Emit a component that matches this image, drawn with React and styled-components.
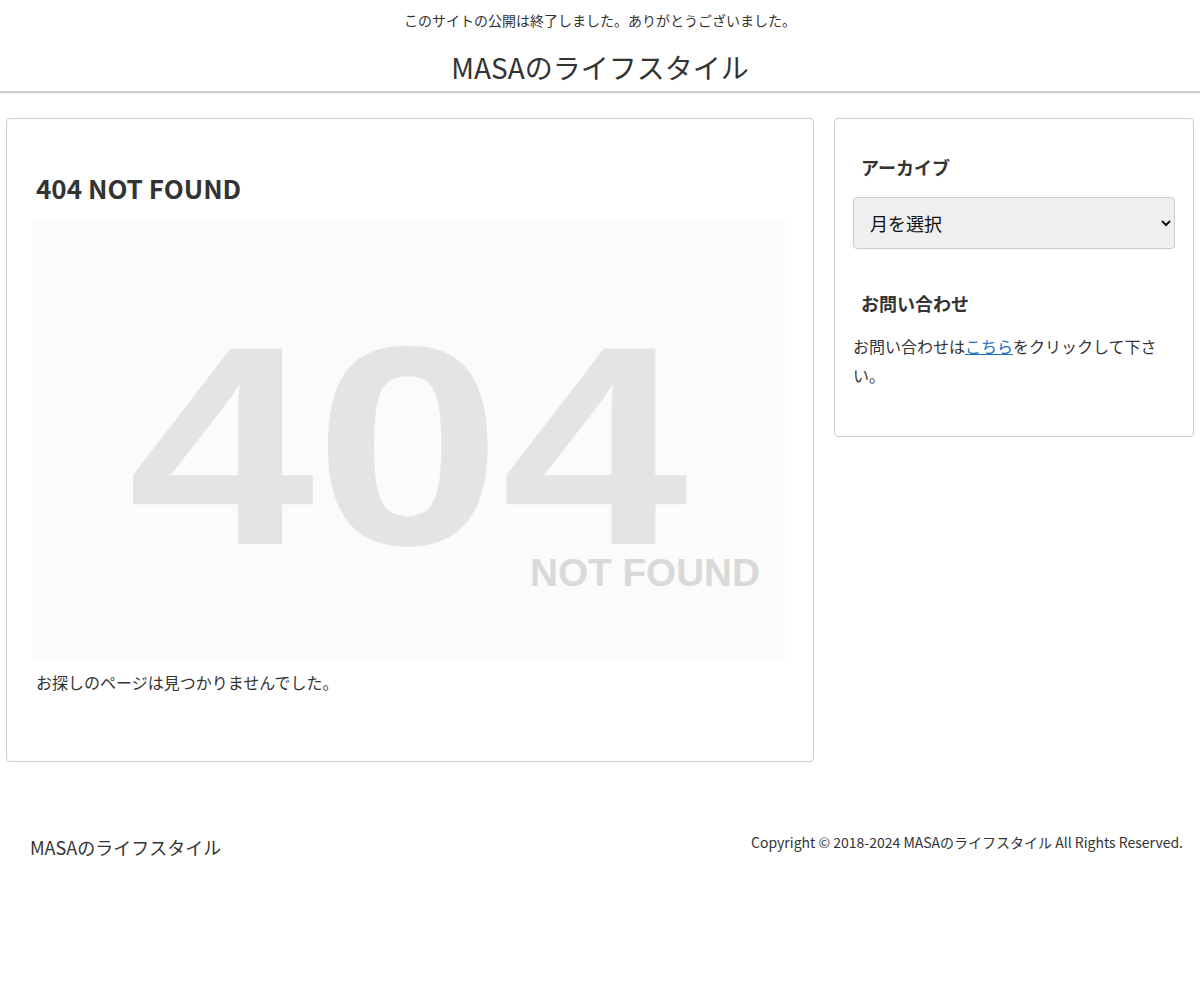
import styled, { createGlobalStyle } from "styled-components";

const GlobalStyle = createGlobalStyle`
  body {
    margin: 0;
    background: #fff;
    color: #333;
    font-family: "Noto Sans CJK JP", "Noto Sans", sans-serif;
  }
  * {
    box-sizing: border-box;
  }
`;

const App = () => {
  return (
    <>
      <GlobalStyle />
      <Header>
        <Notice>このサイトの公開は終了しました。ありがとうございました。</Notice>
        <SiteTitle>MASAのライフスタイル</SiteTitle>
      </Header>
      <Wrap>
        <Card>
          <PageTitle>404 NOT FOUND</PageTitle>
          <NotFoundImage viewBox="0 0 752 440" role="img">
            <rect width="752" height="440" fill="#fbfbfb" />
            <text
              x="95"
              y="324"
              fontFamily="Liberation Sans, Arial, sans-serif"
              fontWeight="700"
              fontSize="284"
              fill="#e4e4e4"
              textLength="560"
              lengthAdjust="spacingAndGlyphs"
            >
              404
            </text>
            <text
              x="497"
              y="366"
              fontFamily="Liberation Sans, Arial, sans-serif"
              fontWeight="700"
              fontSize="38"
              fill="#d9d9d9"
              textLength="230"
              lengthAdjust="spacingAndGlyphs"
            >
              NOT FOUND
            </text>
          </NotFoundImage>
          <Message>お探しのページは見つかりませんでした。</Message>
        </Card>
        <Sidebar>
          <WidgetTitle>アーカイブ</WidgetTitle>
          <Select defaultValue="">
            <option value="">月を選択</option>
          </Select>
          <WidgetTitle $spaced>お問い合わせ</WidgetTitle>
          <WidgetText>
            お問い合わせは<a href="#contact">こちら</a>をクリックして下さい。
          </WidgetText>
        </Sidebar>
      </Wrap>
      <Footer>
        <FooterName>MASAのライフスタイル</FooterName>
        <Copyright>
          Copyright © 2018-2024 MASAのライフスタイル All Rights Reserved.
        </Copyright>
      </Footer>
    </>
  );
};

export default App;

const Header = styled.header`
  padding-top: 8px;
  text-align: center;
  border-bottom: 2px solid #cfcfcf;
  box-shadow: 0 1px 1px rgba(0, 0, 0, 0.06);
`;

const Notice = styled.div`
  font-size: 14px;
  line-height: 24px;
`;

const SiteTitle = styled.div`
  margin-top: 12px;
  font-size: 28px;
  line-height: 46px;
  height: 47px;
`;

const Wrap = styled.main`
  display: grid;
  grid-template-columns: minmax(0, 1fr) 360px;
  gap: 20px;
  align-items: start;
  padding: 25px 6px 0;
`;

const Card = styled.article`
  border: 1px solid #ccc;
  border-radius: 4px;
  padding: 48px 29px 64px 29px;
`;

const PageTitle = styled.h1`
  margin: 0 0 12px;
  font-size: 26px;
  line-height: 41px;
  font-weight: 700;
`;

const NotFoundImage = styled.svg`
  display: block;
  width: 752px;
  height: 440px;
  margin: 0 -1px 0 -3px;
`;

const Message = styled.p`
  margin: 8px 0 0;
  font-size: 16px;
  line-height: 29px;
`;

const Sidebar = styled.aside`
  border: 1px solid #ccc;
  border-radius: 4px;
  padding: 34px 18px 46px;
`;

const WidgetTitle = styled.h3`
  margin: ${(p) => (p.$spaced ? "40px" : "0")} 0 ${(p) =>
      p.$spaced ? "14px" : "15px"};
  padding-left: 8px;
  font-size: 18px;
  line-height: 29px;
  font-weight: 700;
`;

const Select = styled.select`
  display: block;
  width: 100%;
  height: 52px;
  padding: 0 12px;
  font-size: 18px;
  font-family: "Noto Sans CJK JP", sans-serif;
  color: #111;
  background: #efefef;
  border: 1px solid #ccc;
  border-radius: 4px;
`;

const WidgetText = styled.p`
  margin: 0;
  font-size: 16px;
  line-height: 29px;
  a {
    color: #1e6fbf;
    text-decoration: underline;
  }
`;

const Footer = styled.footer`
  display: flex;
  justify-content: space-between;
  align-items: flex-start;
  padding: 69px 17px 0 30px;
`;

const FooterName = styled.div`
  margin-top: 2px;
  font-size: 18px;
  line-height: 29px;
`;

const Copyright = styled.div`
  font-size: 14px;
  line-height: 22px;
`;
